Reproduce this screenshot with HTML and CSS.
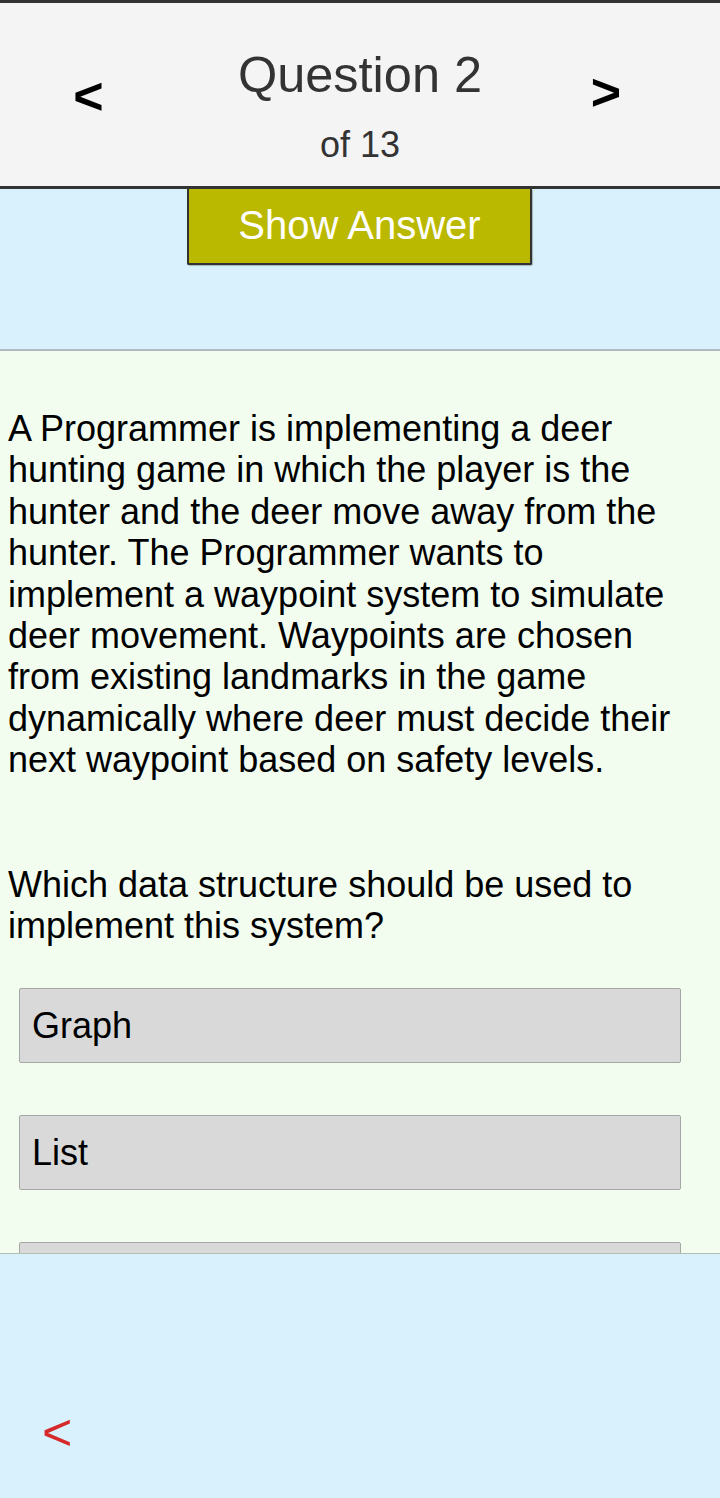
FILE: index.html
```html
<!DOCTYPE html>
<html>
<head>
<meta charset="utf-8">
<link rel="stylesheet" href="styles.css">
</head>
<body>
<header class="topbar">
  <div class="nav nav-prev">&lt;</div>
  <div class="title">
    <div class="title-main">Question 2</div>
    <div class="title-sub">of 13</div>
  </div>
  <div class="nav nav-next">&gt;</div>
</header>
<section class="actions">
  <button class="show-answer">Show Answer</button>
</section>
<main class="content">
  <p class="question">A Programmer is implementing a deer hunting game in which the player is the hunter and the deer move away from the hunter. The Programmer wants to implement a waypoint system to simulate deer movement. Waypoints are chosen from existing landmarks in the game dynamically where deer must decide their next waypoint based on safety levels.</p>
  <p class="question prompt">Which data structure should be used to implement this system?</p>
  <ul class="options">
    <li class="option">Graph</li>
    <li class="option">List</li>
    <li class="option"></li>
  </ul>
</main>
<footer class="footer">
  <div class="back">&lt;</div>
</footer>
</body>
</html>
```

FILE: styles.css
```css
* { box-sizing: border-box; }
html, body {
  margin: 0;
  padding: 0;
}
body {
  font-family: "Liberation Sans", Arial, sans-serif;
  background: #f2fdf0;
  width: 720px;
  height: 1498px;
  overflow: hidden;
  display: flex;
  flex-direction: column;
}
.topbar {
  flex: none;
  display: grid;
  grid-template-columns: 177px 366px 126px;
  padding-right: 51px;
  height: 189px;
  background: #f4f4f4;
  border-top: 3px solid #333;
  border-bottom: 3px solid #333;
}
.nav {
  font-weight: bold;
  font-size: 52px;
  line-height: 60px;
  color: #000;
  text-align: center;
}
.nav-prev { padding-top: 63px; }
.nav-next { padding-top: 59px; }
.title {
  display: flex;
  flex-direction: column;
  align-items: center;
  padding-top: 43px;
  color: #333;
}
.title-main {
  font-size: 50.5px;
  line-height: 58px;
}
.title-sub {
  font-size: 36px;
  line-height: 41.4px;
  margin-top: 20px;
}
.actions {
  flex: none;
  background: #d8f1fd;
  height: 162px;
  border-bottom: 2px solid #aebcc2;
  display: flex;
  justify-content: center;
  align-items: flex-start;
}
.show-answer {
  width: 345px;
  height: 76px;
  margin-left: -1px;
  background: #bbb800;
  color: #fff;
  font-family: "Liberation Sans", Arial, sans-serif;
  font-size: 40px;
  border: 2px solid #333;
  border-top: none;
  padding: 0 0 2px;
  border-radius: 0 0 2px 2px;
  box-shadow: 1px 1px 1px rgba(0,0,0,0.25);
}
.content {
  flex: 1;
  min-height: 0;
  overflow: hidden;
  padding: 57px 8px 0 8px;
}
.question {
  margin: 0;
  font-size: 36px;
  line-height: 41.4px;
  color: #000;
}
.prompt {
  margin-top: 83px;
}
.options {
  list-style: none;
  margin: 42px 31px 0 11px;
  padding: 0;
  display: flex;
  flex-direction: column;
  gap: 52px;
}
.option {
  flex: none;
  height: 75px;
  background: #d9d9d9;
  border: 1px solid #a6a6a6;
  border-radius: 2px;
  font-size: 36px;
  line-height: 41.4px;
  padding: 16px 12px;
  color: #000;
}
.footer {
  flex: none;
  height: 245px;
  background: #d8f1fd;
  border-top: 1px solid #b4bdb4;
  padding: 148px 0 0 42px;
}
.back {
  color: #d62a2a;
  font-size: 52px;
  line-height: 60px;
}
```
